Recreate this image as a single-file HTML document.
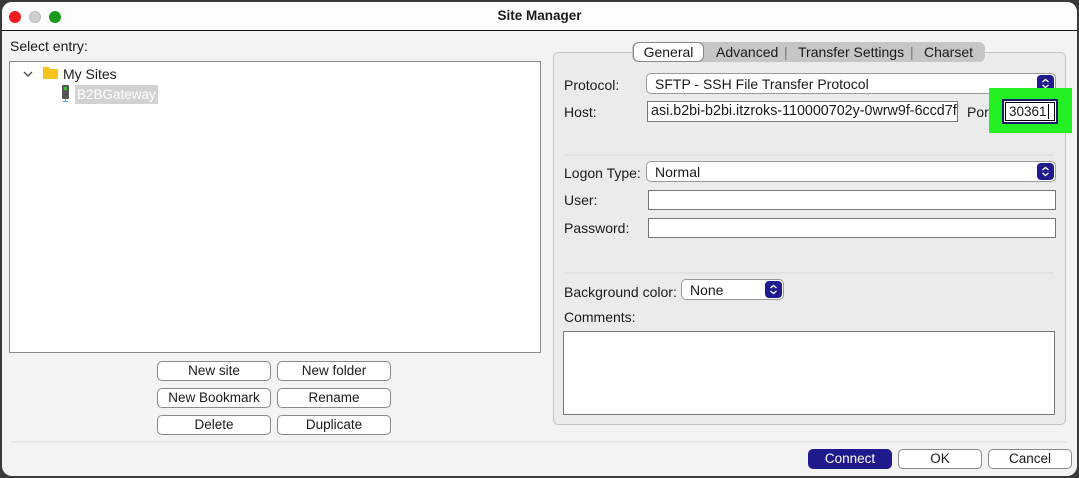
<!DOCTYPE html>
<html><head><meta charset="utf-8"><style>
*{box-sizing:border-box;margin:0;padding:0}
body{width:1079px;height:478px;overflow:hidden;background:#3a3a3a;font-family:"Liberation Sans",sans-serif;font-size:14px;color:#1a1a1a;position:relative}
.win{position:absolute;left:2px;top:2px;width:1075px;height:474px;background:#f3f3f3;border-radius:10px;overflow:hidden}
.tb{position:absolute;left:0;top:0;width:100%;height:29px;background:#fdfdfd;border-bottom:1px solid #111}
.a{position:absolute;white-space:nowrap}
.dot{position:absolute;width:12px;height:12px;border-radius:50%;top:9px}
.box{position:absolute;background:#fff;border:1px solid #777}
.btn{position:absolute;height:20px;background:#fff;border:1px solid #8a8a8a;border-radius:5px;text-align:center;line-height:18px;font-size:13.5px}
.sel{position:absolute;height:21px;background:#fff;border:1px solid #999;border-radius:5px;padding-left:8px;line-height:20px}
.step{position:absolute;right:1px;top:1px;width:17px;height:17px;background:#1e1b8e;border-radius:4px}
.step svg{position:absolute;left:4px;top:3px}
.sep{position:absolute;height:2px;background:#e2e2e2}
</style></head><body>
<div class="win">
<div class="tb">
<div class="dot" style="left:7px;background:#ee1c1c"></div>
<div class="dot" style="left:27px;background:#cfcfcf;border:1px solid #bbb"></div>
<div class="dot" style="left:47px;background:#1a9a1a"></div>
<div class="a" style="left:0;width:1075px;text-align:center;top:6px;font-weight:bold;font-size:13.5px">Site Manager</div>
</div>
</div>
<div class="a" style="left:10px;top:38px">Select entry:</div>
<div class="box" style="left:9px;top:61px;width:532px;height:292px;border-color:#8a8a8a"></div>
<svg class="a" style="left:23px;top:70px" width="10" height="8"><path d="M1 2 L5 6 L9 2" stroke="#444" stroke-width="1.3" fill="none"/></svg>
<svg class="a" style="left:43px;top:66px" width="15" height="13"><path d="M0 1 h6 l1 2 h8 v10 h-15z" fill="#f7c31a"/></svg>
<div class="a" style="left:63px;top:66px">My Sites</div>
<svg class="a" style="left:62px;top:85px" width="7" height="18"><rect x="0" y="0" width="7" height="14" rx="1" fill="#555"/><rect x="2" y="2" width="3" height="3" fill="#3c3"/><rect x="3" y="14" width="1" height="3" fill="#4af"/><rect x="1" y="16" width="5" height="1" fill="#4af"/></svg>
<div class="a" style="left:75px;top:85px;width:83px;height:19px;background:#d2d2d2;color:#fff;line-height:19px;padding-left:2px;font-size:13.5px">B2BGateway</div>
<div class="btn" style="left:157px;top:361px;width:114px">New site</div>
<div class="btn" style="left:277px;top:361px;width:114px">New folder</div>
<div class="btn" style="left:157px;top:388px;width:114px">New Bookmark</div>
<div class="btn" style="left:277px;top:388px;width:114px">Rename</div>
<div class="btn" style="left:157px;top:415px;width:114px">Delete</div>
<div class="btn" style="left:277px;top:415px;width:114px">Duplicate</div>

<div class="a" style="left:553px;top:52px;width:513px;height:373px;background:#ebebeb;border:1px solid #c4c4c4;border-radius:5px"></div>
<div class="a" style="left:632px;top:42px;width:353px;height:20px;background:#c6c6c6;border-radius:6px"></div>
<div class="a" style="left:633px;top:42px;width:71px;height:20px;background:#fff;border:1px solid #888;border-radius:6px;text-align:center;line-height:18px">General</div>
<div class="a" style="left:716px;top:44px">Advanced</div>
<div class="a" style="left:784px;top:44px;color:#777">|</div>
<div class="a" style="left:798px;top:44px">Transfer Settings</div>
<div class="a" style="left:910px;top:44px;color:#777">|</div>
<div class="a" style="left:924px;top:44px">Charset</div>

<div class="a" style="left:564px;top:77px">Protocol:</div>
<div class="sel" style="left:646px;top:73px;width:410px">SFTP - SSH File Transfer Protocol<div class="step"><svg width="9" height="11"><path d="M1.5 4 L4.5 1.5 L7.5 4 M1.5 7 L4.5 9.5 L7.5 7" stroke="#fff" stroke-width="1.3" fill="none"/></svg></div></div>
<div class="a" style="left:564px;top:104px">Host:</div>
<div class="box" style="left:647px;top:101px;width:311px;height:21px;padding-left:3px;line-height:19px;overflow:hidden;font-size:14.3px">asi.b2bi-b2bi.itzroks-110000702y-0wrw9f-6ccd7f</div>
<div class="a" style="left:967px;top:104px">Port</div>
<div class="a" style="left:989px;top:88px;width:83px;height:45px;background:#22f022"></div>
<div class="a" style="left:1002px;top:99px;width:56px;height:25px;background:#fff;border:2px solid #1a1a6a;outline:1px solid #000;outline-offset:-4px;padding-left:5px;line-height:21px;font-size:13.5px">30361<span style="border-left:1.5px solid #000;margin-left:1px"></span></div>

<div class="sep" style="left:565px;top:154px;width:489px"></div>
<div class="a" style="left:564px;top:165px">Logon Type:</div>
<div class="sel" style="left:646px;top:161px;width:410px">Normal<div class="step"><svg width="9" height="11"><path d="M1.5 4 L4.5 1.5 L7.5 4 M1.5 7 L4.5 9.5 L7.5 7" stroke="#fff" stroke-width="1.3" fill="none"/></svg></div></div>
<div class="a" style="left:564px;top:192px">User:</div>
<div class="box" style="left:648px;top:190px;width:408px;height:20px"></div>
<div class="a" style="left:564px;top:220px">Password:</div>
<div class="box" style="left:648px;top:218px;width:408px;height:20px"></div>
<div class="sep" style="left:565px;top:272px;width:489px"></div>
<div class="a" style="left:564px;top:284px">Background color:</div>
<div class="sel" style="left:681px;top:279px;width:103px">None<div class="step"><svg width="9" height="11"><path d="M1.5 4 L4.5 1.5 L7.5 4 M1.5 7 L4.5 9.5 L7.5 7" stroke="#fff" stroke-width="1.3" fill="none"/></svg></div></div>
<div class="a" style="left:564px;top:309px">Comments:</div>
<div class="box" style="left:563px;top:331px;width:492px;height:84px"></div>

<div class="sep" style="left:11px;top:441px;width:1056px;background:#e8e8e8"></div>
<div class="btn" style="left:808px;top:449px;width:84px;background:#1e1a8c;border-color:#1e1a8c;color:#fff">Connect</div>
<div class="btn" style="left:898px;top:449px;width:84px">OK</div>
<div class="btn" style="left:988px;top:449px;width:84px">Cancel</div>
</body></html>
